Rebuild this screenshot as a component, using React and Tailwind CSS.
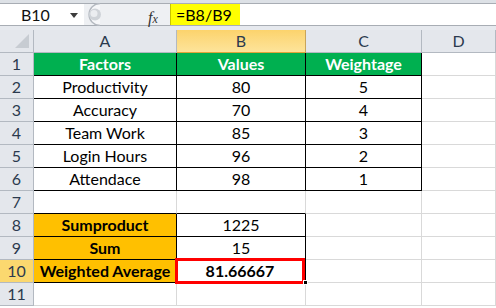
import React from "react";

const font = { fontFamily: "Lato, 'Open Sans', sans-serif" };

const Cell = ({ children, className = "" }) => (
  <div className={`h-[23px] flex items-center justify-center border-r border-b text-[16px] leading-none ${className}`}>
    {children}
  </div>
);

const RowHead = ({ n, active }) => (
  <Cell className={`border-[#b3b9c1] text-[#2b3a4e] ${active ? "bg-[#fbd86f]" : "bg-[#e4e7ec]"}`}>{n}</Cell>
);

const Empty = ({ className = "" }) => <Cell className={`border-[#d9d9d9] bg-white ${className}`} />;

const factors = [
  ["Productivity", 80, 5],
  ["Accuracy", 70, 4],
  ["Team Work", 85, 3],
  ["Login Hours", 96, 2],
  ["Attendace", 98, 1],
];

export default function App() {
  return (
    <div className="w-[496px] h-[308px] overflow-hidden bg-white text-black" style={font}>
      {/* formula bar */}
      <div className="h-[30px] bg-[#e6e9ee] border-t-[3px] border-[#dde1e6] flex flex-col">
        <div className="h-[23px] flex items-stretch border-t border-b border-[#a8adb4] bg-white">
          <div className="w-[84px] flex items-center pl-[21px] text-[16px] text-[#111] relative">
            B10
            <svg className="absolute left-[70px] top-[9px]" width="8" height="5" viewBox="0 0 8 5">
              <path d="M0 0h8L4 5z" fill="#3c3c3c" />
            </svg>
          </div>
          <div className="w-[86px] bg-[#eef0f3] flex items-center relative">
            <svg className="absolute left-0 top-[-1px]" width="22" height="23" viewBox="0 0 22 23">
              <path d="M16 0.5 A11 11 0 0 0 16 22.5" fill="#f6f7f9" stroke="#b4b9c0" strokeWidth="1.3" />
              <circle cx="11" cy="11.5" r="6" fill="#cfd3d8" />
              <circle cx="10" cy="10.5" r="3.5" fill="#ebedf0" />
            </svg>
            <span className="absolute left-[64px] top-[2px] text-[16px] italic text-[#333]" style={{ fontFamily: "'Liberation Serif', serif" }}>
              f<span className="text-[12px]">x</span>
            </span>
          </div>
          <div className="w-[70px] bg-[#ffff00] border-l border-[#c9c400] flex items-center pl-[5px] text-[16px]">=B8/B9</div>
          <div className="flex-1 bg-white" />
        </div>
      </div>

      {/* grid */}
      <div className="grid grid-cols-[34px_143px_129px_116px_1fr]">
        {/* column headers */}
        <div className="h-[23px] bg-[#e4e7ec] border-r border-b border-[#b3b9c1] relative">
          <svg className="absolute right-[4px] bottom-[4px]" width="14" height="14" viewBox="0 0 14 14">
            <path d="M14 0V14H0z" fill="#c7ccd2" />
          </svg>
        </div>
        <Cell className="bg-[#e4e7ec] border-[#b3b9c1] text-[#2b3a4e]">A</Cell>
        <Cell className="bg-gradient-to-b from-[#fcd36c] to-[#fde49a] border-[#c9a55a] text-[#2b3a4e] border-b-[#e2a43a]">B</Cell>
        <Cell className="bg-[#e4e7ec] border-[#b3b9c1] text-[#2b3a4e]">C</Cell>
        <Cell className="bg-[#e4e7ec] border-[#b3b9c1] text-[#2b3a4e]">D</Cell>

        {/* row 1 */}
        <RowHead n={1} />
        <Cell className="bg-[#00b050] border-black text-white font-bold">Factors</Cell>
        <Cell className="bg-[#00b050] border-black text-white font-bold">Values</Cell>
        <Cell className="bg-[#00b050] border-black text-white font-bold">Weightage</Cell>
        <Empty />

        {factors.map(([f, v, w], i) => (
          <React.Fragment key={f}>
            <RowHead n={i + 2} />
            <Cell className="border-black">{f}</Cell>
            <Cell className="border-black">{v}</Cell>
            <Cell className="border-black">{w}</Cell>
            <Empty />
          </React.Fragment>
        ))}

        {/* row 7 */}
        <RowHead n={7} />
        <Empty className="border-b-black" />
        <Empty className="border-b-black" />
        <Empty />
        <Empty />

        {/* row 8 */}
        <RowHead n={8} />
        <Cell className="bg-[#ffc000] border-black font-bold">Sumproduct</Cell>
        <Cell className="border-black">1225</Cell>
        <Empty />
        <Empty />

        {/* row 9 */}
        <RowHead n={9} />
        <Cell className="bg-[#ffc000] border-black font-bold">Sum</Cell>
        <Cell className="border-black">15</Cell>
        <Empty />
        <Empty />

        {/* row 10 */}
        <RowHead n={10} active />
        <Cell className="bg-[#ffc000] border-black font-bold">Weighted Average</Cell>
        <div className="h-[23px] border-r border-b border-black relative">
          <div className="absolute -left-[2px] -top-[2px] w-[130px] h-[26px] border-[3px] border-[#ff0000] flex items-center justify-center text-[16px] font-bold leading-none">
            81.66667
          </div>
          <div className="absolute -right-[3px] -bottom-[3px] w-[5px] h-[5px] bg-black border border-white" />
        </div>
        <Empty />
        <Empty />

        {/* row 11 */}
        <RowHead n={11} />
        <Empty />
        <Empty />
        <Empty />
        <Empty />
      </div>
    </div>
  );
}
